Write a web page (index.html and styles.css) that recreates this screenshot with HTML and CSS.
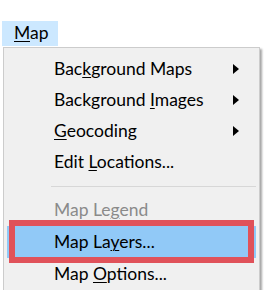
FILE: index.html
```html
<!DOCTYPE html>
<html lang="en">
<head>
    <meta charset="UTF-8">
    <meta name="viewport" content="width=device-width, initial-scale=1.0">
    <title>Map Menu</title>
    <link rel="stylesheet" href="styles.css">
</head>
<body>
    <div class="menubar">
        <span class="menubar-item"><u>M</u>ap</span>
    </div>
    <div class="menu">
        <div class="item sub"><span>Bac<u>k</u>ground Maps</span></div>
        <div class="item sub"><span>Background <u>I</u>mages</span></div>
        <div class="item sub"><span><u>G</u>eocoding</span></div>
        <div class="item"><span>Edit <u>L</u>ocations...</span></div>
        <div class="sep"></div>
        <div class="item big disabled"><span>Map Le<u>g</u>end</span></div>
        <div class="item big active"><span>Map La<u>y</u>ers...</span></div>
        <div class="item big"><span>Map <u>O</u>ptions...</span></div>
    </div>
    <div class="callout"></div>
</body>
</html>
```

FILE: styles.css
```css
body {
    margin: 0;
    background: #fff;
    font-family: Lato, "Open Sans", Arial, sans-serif;
    font-size: 17.5px;
    color: #000;
    overflow: hidden;
}
u {
    text-decoration-thickness: 1px;
    text-underline-offset: 2px;
}
.menubar {
    padding: 21px 0 0 2px;
    height: 25px;
}
.menubar-item {
    display: inline-block;
    box-sizing: border-box;
    width: 56px;
    height: 25px;
    padding-left: 12px;
    line-height: 24px;
    background: #cce8ff;
}
.menu {
    box-sizing: border-box;
    width: 257px;
    margin: 1px 0 0 3px;
    padding: 5px 3px;
    background: #f0f0f0;
    border: 1px solid #cccccc;
    box-shadow: 2px 2px 2px rgba(0, 0, 0, 0.35);
}
.item {
    display: flex;
    align-items: center;
    height: 31px;
    padding: 0 17px 0 47px;
    line-height: 31px;
}
.item.big {
    height: 32px;
    line-height: 32px;
}
.item.sub::after {
    content: "";
    margin-left: auto;
    border-left: 6px solid #000;
    border-top: 5px solid transparent;
    border-bottom: 5px solid transparent;
}
.item.disabled {
    color: #8a8a8a;
}
.item.active {
    background: #91c9f7;
}
.sep {
    height: 1px;
    margin: 9px 0 7px 44px;
    background: #d7d7d7;
}
.callout {
    position: absolute;
    left: 9px;
    top: 220px;
    width: 245px;
    height: 43px;
    box-sizing: border-box;
    border: 6px solid #e0525a;
}
```
